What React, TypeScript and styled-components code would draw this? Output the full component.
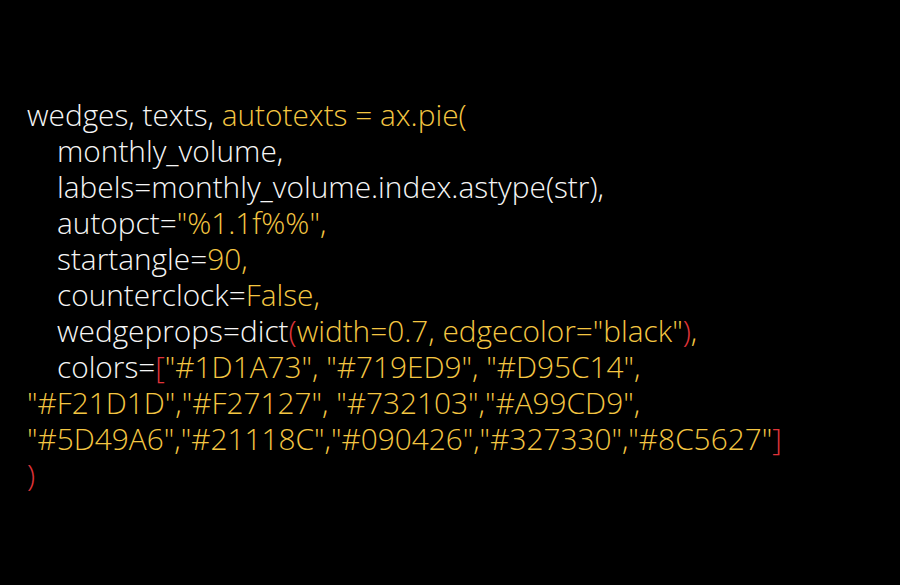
import React from "react";
import styled, { createGlobalStyle } from "styled-components";

const Global = createGlobalStyle`
  html, body { margin: 0; padding: 0; background: #000; }
  body { width: 900px; height: 585px; overflow: hidden; }
`;

const Screen = styled.div`
  width: 900px;
  height: 585px;
  background: #000;
  box-sizing: border-box;
  padding: 97px 0 0 27px;
  font-family: "Open Sans", "Noto Sans", sans-serif;
  font-weight: 300;
  font-size: 29.8px;
  line-height: 36px;
  color: #f6f6f6;
  white-space: pre;
`;

const Line = styled.div<{ $indent?: boolean }>`
  padding-left: ${(p) => (p.$indent ? "30px" : "0")};
  height: 36px;
`;

const Y = styled.span`
  color: #f4c642;
`;
const R = styled.span`
  color: #e0343a;
`;

export default function App() {
  return (
    <>
      <Global />
      <Screen>
        <Line>
          wedges, texts, <Y>autotexts = ax.pie</Y><Y>(</Y>
        </Line>
        <Line $indent>monthly_volume,</Line>
        <Line $indent>labels=monthly_volume.index.astype(str),</Line>
        <Line $indent>
          autopct=<Y>"%1.1f%%"</Y><Y>,</Y>
        </Line>
        <Line $indent>
          startangle=<Y>90,</Y>
        </Line>
        <Line $indent>
          counterclock=<Y>False,</Y>
        </Line>
        <Line $indent>
          wedgeprops=dict<R>(</R>
          <Y>width=0.7, edgecolor="black"</Y>
          <R>)</R>
          <Y>,</Y>
        </Line>
        <Line $indent>
          colors=<R>[</R>
          <Y>"#1D1A73", "#719ED9", "#D95C14",</Y>
        </Line>
        <Line>
          <Y>"#F21D1D","#F27127", "#732103","#A99CD9",</Y>
        </Line>
        <Line>
          <Y>"#5D49A6","#21118C","#090426","#327330","#8C5627"</Y>
          <R>]</R>
        </Line>
        <Line>
          <R>)</R>
        </Line>
      </Screen>
    </>
  );
}
